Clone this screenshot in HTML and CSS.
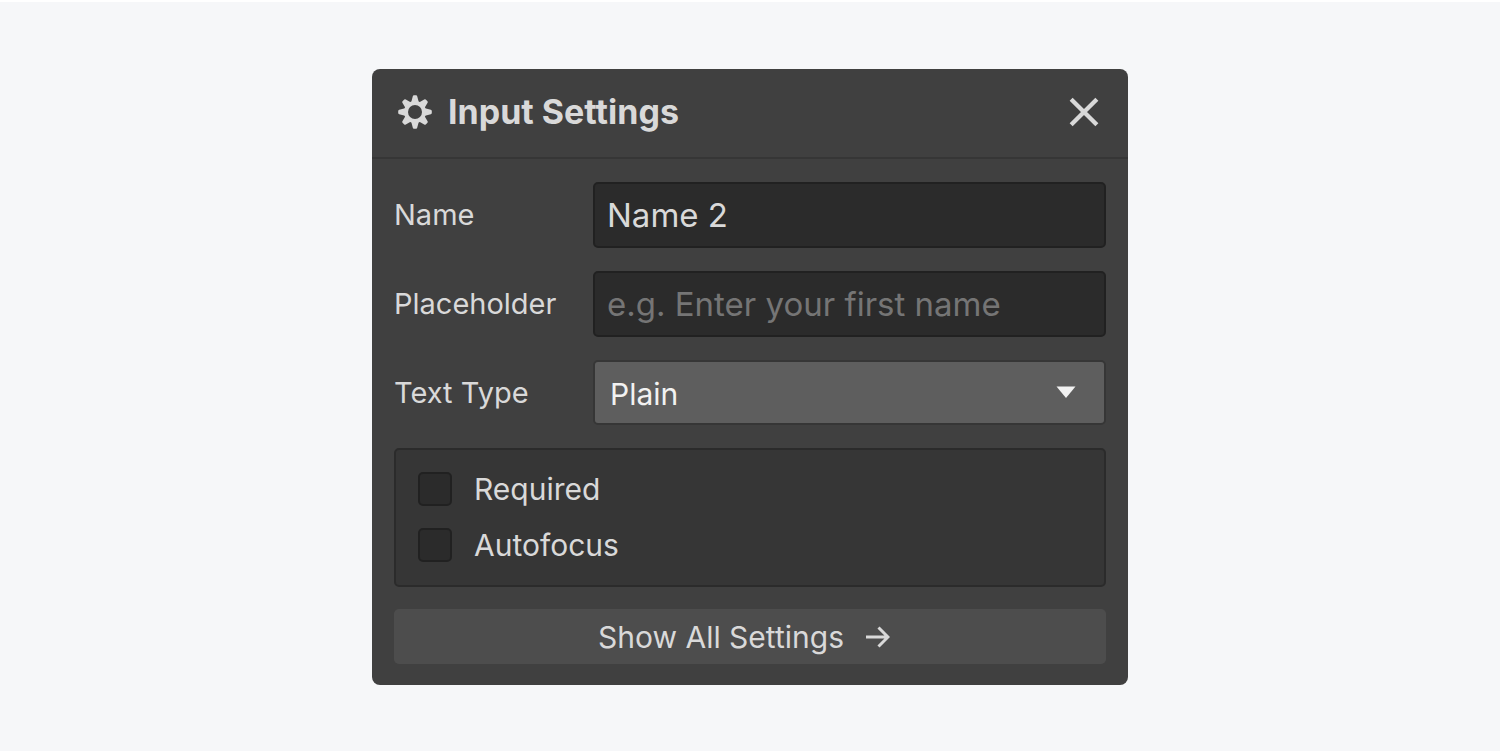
FILE: index.html
```html
<!DOCTYPE html>
<html lang="en">
<head>
<meta charset="utf-8">
<meta name="viewport" content="width=device-width, initial-scale=1">
<title>Input Settings</title>
<link rel="stylesheet" href="styles.css">
</head>
<body class="page">
<main class="panel">
  <header class="panel-header">
    <svg class="gear" viewBox="0 0 34 34" aria-hidden="true">
      <g fill="currentColor">
        <path d="M13 8 14.800 1.200Q15 .2 16 .2h2q1 0 1.200 1L21 8v18l-1.800 6.800q-.2 1-1.200 1h-2q-1 0-1.200-1L13 26z"/>
        <path d="M13 8 14.800 1.200Q15 .2 16 .2h2q1 0 1.200 1L21 8v18l-1.800 6.800q-.2 1-1.200 1h-2q-1 0-1.200-1L13 26z" transform="rotate(90 17 17)"/>
        <path d="M13 8 14.600 1.600Q14.800 .6 15.800 .6h2.400q1 0 1.200 1L21 8v18l-1.600 6.400q-.2 1-1.200 1h-2.400q-1 0-1.200-1L13 26z" transform="rotate(45 17 17)"/>
        <path d="M13 8 14.600 1.600Q14.800 .6 15.800 .6h2.400q1 0 1.200 1L21 8v18l-1.600 6.400q-.2 1-1.200 1h-2.400q-1 0-1.200-1L13 26z" transform="rotate(135 17 17)"/>
        <circle cx="17" cy="17" r="11"/>
      </g>
      <circle class="gear-hole" cx="17" cy="17" r="7"/>
    </svg>
    <h1 class="title">Input Settings</h1>
    <button class="close" type="button" aria-label="Close">
      <svg class="close-icon" viewBox="0 0 28 28" aria-hidden="true"><path d="M2 2 26 26M26 2 2 26"/></svg>
    </button>
  </header>
  <form class="settings">
    <div class="row">
      <label class="label" for="name">Name</label>
      <input class="field" id="name" type="text" value="Name 2">
    </div>
    <div class="row">
      <label class="label" for="placeholder">Placeholder</label>
      <input class="field" id="placeholder" type="text" placeholder="e.g. Enter your first name">
    </div>
    <div class="row">
      <label class="label" for="text-type">Text Type</label>
      <div class="select-wrap">
        <select class="select" id="text-type"><option>Plain</option></select>
        <svg class="caret" viewBox="0 0 20 12" aria-hidden="true"><path d="M.5 .5h19L10 12z"/></svg>
      </div>
    </div>
    <div class="options">
      <label class="option"><input class="check" type="checkbox">Required</label>
      <label class="option"><input class="check" type="checkbox">Autofocus</label>
    </div>
    <button class="show-all" type="button">Show All Settings
      <svg class="arrow" viewBox="0 0 24 24" aria-hidden="true"><path d="M0 12h22M12.500 2.500 22 12l-9.500 9.500"/></svg>
    </button>
  </form>
</main>
</body>
</html>
```
FILE: styles.css
```css
* { box-sizing: border-box; }
.page {
  margin: 0;
  min-height: 100vh;
  padding: 67px 24px 64px;
  border-top: 2px solid #fff;
  background: #f6f7f9;
  color: #d9d9d9;
  font: 400 30px/36px Inter, "Liberation Sans", sans-serif;
}
.panel {
  max-width: 756px;
  margin: 0 auto;
  border-radius: 8px;
  background: #404040;
}
.panel-header {
  display: flex;
  align-items: center;
  height: 90px;
  padding: 0 29px 2px 26px;
  border-bottom: 2px solid #363636;
}
.gear { width: 34px; height: 34px; flex: none; }
.gear-hole { fill: #404040; }
.title {
  flex: 1;
  margin: 0 0 0 16px;
  font-size: 34px;
  line-height: 40px;
  font-weight: 700;
}
.close {
  display: flex;
  padding: 0;
  border: 0;
  background: none;
  color: inherit;
}
.close-icon { width: 30px; height: 30px; fill: none; stroke: currentColor; stroke-width: 4; }
.settings { padding: 23px 22px 21px; }
.row {
  display: grid;
  grid-template-columns: 199px minmax(0, 1fr);
  align-items: center;
  margin-bottom: 23px;
}
.label { font-size: 29px; }
.field {
  width: 100%;
  height: 66px;
  padding: 0 12px;
  border: 2px solid #212121;
  border-radius: 5px;
  background: #2b2b2b;
  color: #d9d9d9;
  font: 400 33px/40px Inter, "Liberation Sans", sans-serif;
}
.field::placeholder { color: #757575; opacity: 1; }
.select-wrap { position: relative; }
.select {
  display: block;
  appearance: none;
  width: 100%;
  height: 65px;
  padding: 2px 48px 0 15px;
  border: 2px solid #363636;
  border-radius: 5px;
  background: #5e5e5e;
  color: #f2f2f2;
  font: 400 30px/36px Inter, "Liberation Sans", sans-serif;
}
.caret {
  position: absolute;
  top: 26px;
  right: 30px;
  width: 20px;
  height: 12px;
  fill: #f2f2f2;
  pointer-events: none;
}
.options {
  display: grid;
  gap: 20px;
  padding: 21px 22px 22px;
  border: 2px solid #2b2b2b;
  border-radius: 5px;
  background: #363636;
}
.option { display: flex; align-items: center; gap: 22px; }
.check {
  appearance: none;
  width: 34px;
  height: 34px;
  margin: 0;
  border: 2px solid #212121;
  border-radius: 5px;
  background: #2b2b2b;
}
.show-all {
  display: flex;
  align-items: center;
  justify-content: center;
  gap: 22px;
  width: 100%;
  height: 55px;
  margin-top: 22px;
  padding: 0 12px 0 0;
  border: 0;
  border-radius: 5px;
  background: #4d4d4d;
  color: #d9d9d9;
  font: 400 30px/36px Inter, "Liberation Sans", sans-serif;
}
.arrow { width: 24px; height: 24px; fill: none; stroke: currentColor; stroke-width: 3; }
```
